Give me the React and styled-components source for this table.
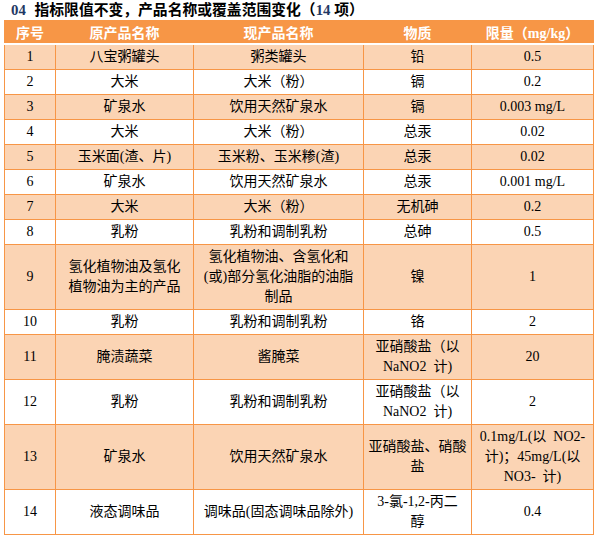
import React from 'react'
import styled, { createGlobalStyle } from 'styled-components'

const GlobalStyle = createGlobalStyle`
    body {
        margin: 0;
        background: #fff;
        font-family: "Liberation Serif", "Noto Sans CJK SC", serif;
    }
`;

const Page = styled.div`
    width: 599px;
    padding: 0 0 0 4px;
    box-sizing: border-box;
`;

const Title = styled.div`
    height: 20px;
    line-height: 20px;
    padding-left: 7px;
    font-size: 14.8px;
    font-weight: bold;
    color: #000;
`;

const Num = styled.span`
    color: #1f3864;
    margin-right: ${p => p.$gap || 0}px;
`;

const Table = styled.table`
    width: 589px;
    table-layout: fixed;
    border-collapse: collapse;
    font-size: 14px;
`;

const HeadCell = styled.th`
    height: 22px;
    padding: 0;
    background: #f79646;
    color: #fff;
    font-weight: bold;
    font-size: 14px;
    text-align: center;
    border: 1px solid #f79646;
    border-bottom: 2px solid #fff;
`;

const Row = styled.tr`
    background: ${p => (p.$shade ? '#fbd4b4' : '#fff')};
`;

const Cell = styled.td`
    padding: 2px 2px;
    line-height: 20px;
    text-align: center;
    vertical-align: middle;
    color: #000;
    border: 1px solid #f79646;
`;

const Line = styled.span`
    white-space: pre;
`;

const rows = [
    ['1', '八宝粥罐头', '粥类罐头', '铅', '0.5'],
    ['2', '大米', '大米（粉）', '镉', '0.2'],
    ['3', '矿泉水', '饮用天然矿泉水', '镉', '0.003 mg/L'],
    ['4', '大米', '大米（粉）', '总汞', '0.02'],
    ['5', '玉米面(渣、片)', '玉米粉、玉米糁(渣)', '总汞', '0.02'],
    ['6', '矿泉水', '饮用天然矿泉水', '总汞', '0.001 mg/L'],
    ['7', '大米', '大米（粉）', '无机砷', '0.2'],
    ['8', '乳粉', '乳粉和调制乳粉', '总砷', '0.5'],
    ['9', ['氢化植物油及氢化', '植物油为主的产品'], ['氢化植物油、含氢化和', '(或)部分氢化油脂的油脂', '制品'], '镍', '1'],
    ['10', '乳粉', '乳粉和调制乳粉', '铬', '2'],
    ['11', '腌渍蔬菜', '酱腌菜', ['亚硝酸盐（以', 'NaNO2  计)'], '20'],
    ['12', '乳粉', '乳粉和调制乳粉', ['亚硝酸盐（以', 'NaNO2  计)'], '2'],
    ['13', '矿泉水', '饮用天然矿泉水', ['亚硝酸盐、硝酸', '盐'], ['0.1mg/L(以  NO2-', '计)；45mg/L(以', 'NO3-  计)']],
    ['14', '液态调味品', '调味品(固态调味品除外)', ['3-氯-1,2-丙二', '醇'], '0.4'],
];

const heads = ['序号', '原产品名称', '现产品名称', '物质', '限量（mg/kg）'];
const widths = [51, 138, 170, 108, 122];

function Lines({ value }) {
    if (!Array.isArray(value)) return value;
    return value.map((line, i) => (
        <React.Fragment key={i}>
            {i > 0 && <br />}
            <Line>{line}</Line>
        </React.Fragment>
    ));
}

function App() {
    return (
        <Page>
            <GlobalStyle />
            <Title>
                <Num $gap={5}>04</Num> 指标限值不变，产品名称或覆盖范围变化（<Num>14</Num> 项）
            </Title>
            <Table>
                <colgroup>
                    {widths.map((w, i) => <col key={i} style={{ width: w }} />)}
                </colgroup>
                <thead>
                    <tr>
                        {heads.map(h => <HeadCell key={h}>{h}</HeadCell>)}
                    </tr>
                </thead>
                <tbody>
                    {rows.map((r, i) => (
                        <Row key={r[0]} $shade={i % 2 === 0}>
                            {r.map((c, j) => (
                                <Cell key={j}><Lines value={c} /></Cell>
                            ))}
                        </Row>
                    ))}
                </tbody>
            </Table>
        </Page>
    )
}

export default App
